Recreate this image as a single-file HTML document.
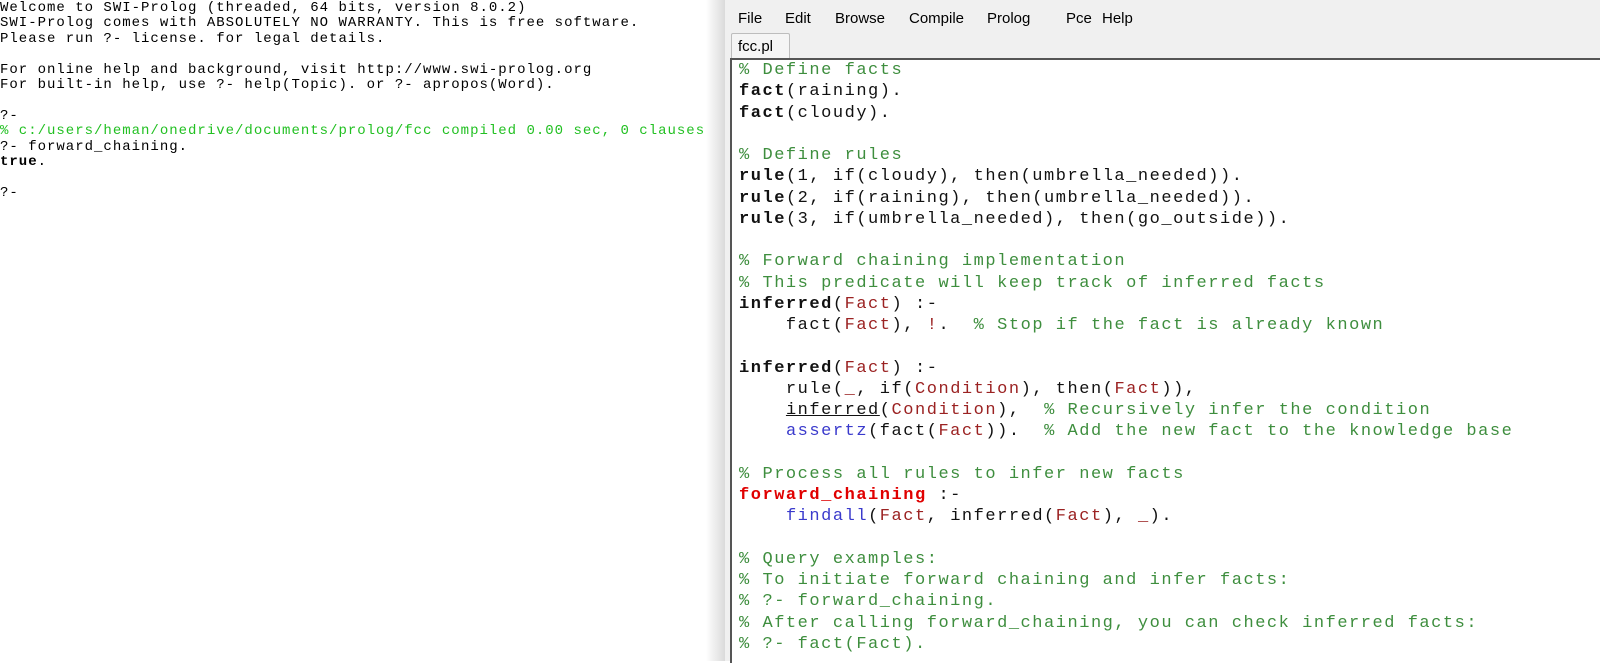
<!DOCTYPE html>
<html><head><meta charset="utf-8"><style>
body{margin:0;width:1600px;height:661px;overflow:hidden;background:#fff;position:relative;font-family:"Liberation Mono",monospace}
#con{position:absolute;left:0;top:1px;font-size:14px;letter-spacing:1px;line-height:15.4px;color:#000;white-space:pre}
#con .g{color:#22c022}
#shadow{position:absolute;left:706px;top:0;width:20px;height:661px;background:linear-gradient(to right,#fff,#e4e4e4 70%,#d8d8d8)}
#win{position:absolute;left:725px;top:0;width:875px;height:661px;background:#f0f0f0}
#menu{position:absolute;top:10px;font-family:"Liberation Sans",sans-serif;font-size:15px;color:#000}
#menu span{position:absolute;white-space:nowrap}
#tab{position:absolute;left:731px;top:33px;width:57px;height:25px;border:1px solid #bdbdbd;border-bottom:none;background:#f5f5f5;font-family:"Liberation Sans",sans-serif;font-size:15px;line-height:25px;text-indent:6px;border-radius:2px 2px 0 0}
#ed{position:absolute;left:730px;top:58px;width:870px;height:603px;background:#fff;border-left:2px solid #555;border-top:2px solid #555}
#code{position:absolute;left:739px;top:60px;font-size:17px;letter-spacing:1.53px;line-height:21.25px;white-space:pre;color:#111}
.c{color:#3e8e3e}.v{color:#9b2222}.k{color:#3a3acc}.h{color:#e00000;font-weight:bold}b{font-weight:bold}
.u{text-decoration:underline}
</style></head><body>
<div id="con">Welcome to SWI-Prolog (threaded, 64 bits, version 8.0.2)
SWI-Prolog comes with ABSOLUTELY NO WARRANTY. This is free software.
Please run ?- license. for legal details.

For online help and background, visit http://www.swi-prolog.org
For built-in help, use ?- help(Topic). or ?- apropos(Word).

?-
<span class="g">% c:/users/heman/onedrive/documents/prolog/fcc compiled 0.00 sec, 0 clauses</span>
?- forward_chaining.
<b>true</b>.

?-</div>
<div id="shadow"></div>
<div id="win"></div>
<div id="menu"><span style="left:738px">File</span><span style="left:785px">Edit</span><span style="left:835px">Browse</span><span style="left:909px">Compile</span><span style="left:987px">Prolog</span><span style="left:1066px">Pce</span><span style="left:1102px">Help</span></div>
<div id="tab">fcc.pl</div>
<div id="ed"></div>
<div id="code"><span class="c">% Define facts</span>
<b>fact</b>(raining).
<b>fact</b>(cloudy).

<span class="c">% Define rules</span>
<b>rule</b>(1, if(cloudy), then(umbrella_needed)).
<b>rule</b>(2, if(raining), then(umbrella_needed)).
<b>rule</b>(3, if(umbrella_needed), then(go_outside)).

<span class="c">% Forward chaining implementation</span>
<span class="c">% This predicate will keep track of inferred facts</span>
<b>inferred</b>(<span class="v">Fact</span>) :-
    fact(<span class="v">Fact</span>), <span class="v">!</span>.  <span class="c">% Stop if the fact is already known</span>

<b>inferred</b>(<span class="v">Fact</span>) :-
    rule(<span class="v">_</span>, if(<span class="v">Condition</span>), then(<span class="v">Fact</span>)),
    <span class="u">inferred</span>(<span class="v">Condition</span>),  <span class="c">% Recursively infer the condition</span>
    <span class="k">assertz</span>(fact(<span class="v">Fact</span>)).  <span class="c">% Add the new fact to the knowledge base</span>

<span class="c">% Process all rules to infer new facts</span>
<span class="h">forward_chaining</span> :-
    <span class="k">findall</span>(<span class="v">Fact</span>, inferred(<span class="v">Fact</span>), <span class="v">_</span>).

<span class="c">% Query examples:</span>
<span class="c">% To initiate forward chaining and infer facts:</span>
<span class="c">% ?- forward_chaining.</span>
<span class="c">% After calling forward_chaining, you can check inferred facts:</span>
<span class="c">% ?- fact(Fact).</span></div>
</body></html>
